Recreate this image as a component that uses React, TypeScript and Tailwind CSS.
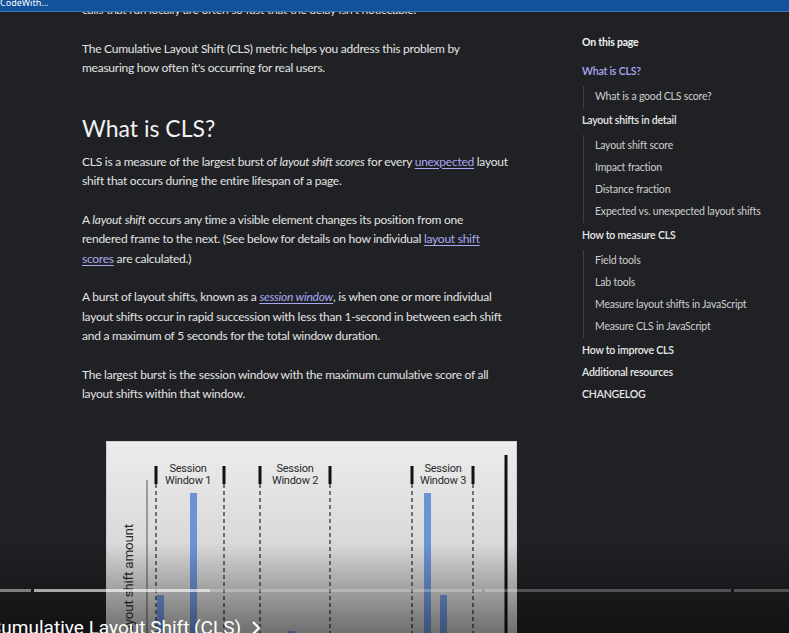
import React from 'react';

const body = { fontFamily: 'Lato, "Noto Sans", sans-serif' };

function Link({ children, italic }: { children: React.ReactNode; italic?: boolean }) {
  return (
    <a className={`text-[#a9a8f2] underline underline-offset-2 decoration-1 ${italic ? 'italic' : ''}`}>
      {children}
    </a>
  );
}

const toc: { label: string; active?: boolean; children?: string[] }[] = [
  { label: 'What is CLS?', active: true, children: ['What is a good CLS score?'] },
  {
    label: 'Layout shifts in detail',
    children: ['Layout shift score', 'Impact fraction', 'Distance fraction', 'Expected vs. unexpected layout shifts'],
  },
  {
    label: 'How to measure CLS',
    children: ['Field tools', 'Lab tools', 'Measure layout shifts in JavaScript', 'Measure CLS in JavaScript'],
  },
  { label: 'How to improve CLS' },
  { label: 'Additional resources' },
  { label: 'CHANGELOG' },
];

function Chart() {
  const dashed = [49, 117, 153, 223, 305, 366];
  const labels = [
    { x: 81, n: 1 },
    { x: 188, n: 2 },
    { x: 336, n: 3 },
  ];
  const bars = [
    { x: 50, top: 153 },
    { x: 83, top: 51 },
    { x: 181, top: 189 },
    { x: 317, top: 51 },
    { x: 333, top: 153 },
  ];
  return (
    <div className="ml-[24px] mt-[37px] h-[220px] w-[411px] border border-[#d0d0d0] bg-gradient-to-b from-[#ececec] to-[#c4c4c4]">
      <svg width="411" height="220" viewBox="0 0 411 220">
        <line x1="40" y1="38" x2="40" y2="220" stroke="#555" strokeWidth="1" />
        {dashed.map((x) => (
          <g key={x}>
            <line x1={x} y1="42" x2={x} y2="220" stroke="#333" strokeWidth="1.3" strokeDasharray="4 3" />
            <line x1={x} y1="24" x2={x} y2="42" stroke="#111" strokeWidth="3" />
          </g>
        ))}
        {labels.map((l) => (
          <text
            key={l.n}
            x={l.x}
            textAnchor="middle"
            fontFamily="Roboto, sans-serif"
            fontSize="11"
            fill="#2a2a2a"
          >
            <tspan x={l.x} y="30">Session</tspan>
            <tspan x={l.x} y="42">Window {l.n}</tspan>
          </text>
        ))}
        {bars.map((b) => (
          <rect key={b.x} x={b.x} y={b.top} width="7" height={220 - b.top} fill="#6b93d6" />
        ))}
        <line x1="399" y1="13" x2="399" y2="220" stroke="#111" strokeWidth="3" />
        <text
          x="26"
          y="82"
          transform="rotate(-90 26 82)"
          textAnchor="end"
          fontFamily="Roboto, sans-serif"
          fontSize="13.5"
          fill="#2a2a2a"
        >
          Layout shift amount
        </text>
      </svg>
    </div>
  );
}

export default function App() {
  return (
    <div className="relative h-[633px] w-[789px] overflow-hidden bg-[#202124] text-[#e3e3e3]" style={body}>
      <div className="flex">
        <main className="ml-[82px] w-[450px] shrink-0 whitespace-nowrap text-[12px] leading-[19.5px] tracking-[-0.25px]">
          <p>calls that run locally are often so fast that the delay isn't noticeable.</p>
          <p className="mt-[19px]">
            The Cumulative Layout Shift (CLS) metric helps you address this problem by
            <br />
            measuring how often it's occurring for real users.
          </p>
          <h2 className="mt-[34px] text-[23px] leading-[32px] tracking-normal text-[#f1f1f1]">What is CLS?</h2>
          <p className="mt-[8px]">
            CLS is a measure of the largest burst of <em>layout shift scores</em> for every <Link>unexpected</Link> layout
            <br />
            shift that occurs during the entire lifespan of a page.
          </p>
          <p className="mt-[19px]">
            A <em>layout shift</em> occurs any time a visible element changes its position from one
            <br />
            rendered frame to the next. (See below for details on how individual <Link>layout shift</Link>
            <br />
            <Link>scores</Link> are calculated.)
          </p>
          <p className="mt-[19px]">
            A burst of layout shifts, known as a <Link italic>session window</Link>, is when one or more individual
            <br />
            layout shifts occur in rapid succession with less than 1-second in between each shift
            <br />
            and a maximum of 5 seconds for the total window duration.
          </p>
          <p className="mt-[19px]">
            The largest burst is the session window with the maximum cumulative score of all
            <br />
            layout shifts within that window.
          </p>
          <Chart />
        </main>

        <aside className="ml-[50px] pt-[32px] whitespace-nowrap text-[10.5px] tracking-[-0.2px]">
          <div className="mb-[7px] flex h-[22px] items-center font-bold text-[#f1f1f1]">On this page</div>
          {toc.map((item) => (
            <div key={item.label}>
              <div
                className={`flex h-[22px] items-center font-semibold ${item.active ? 'text-[#a9a8f2]' : 'text-[#e8e8e8]'}`}
              >
                {item.label}
              </div>
              {item.children && (
                <div className="mb-[2px] ml-[1px] mt-[3px] border-l border-[#3c4043] pl-[11px]">
                  {item.children.map((c) => (
                    <div key={c} className="flex h-[22px] items-center text-[#cfcfcf]">
                      {c}
                    </div>
                  ))}
                </div>
              )}
            </div>
          ))}
        </aside>
      </div>

      {/* browser tab strip over the video */}
      <div className="absolute left-0 right-0 top-0 h-[12px] border-b border-[#3f74b5] bg-[#12519b]">
        <span className="absolute left-0 top-[-4px] text-[9px] text-white" style={{ fontFamily: '"Noto Sans", sans-serif' }}>
          CodeWith...
        </span>
      </div>

      {/* player chrome */}
      <div className="absolute bottom-0 left-0 right-0 h-[90px] bg-gradient-to-b from-transparent to-black/45" />
      <div className="absolute left-0 right-0 top-[589px] flex h-[3px] gap-[3px]">
        <div className="w-[31px] bg-white/45" />
        <div className="relative flex-1 bg-white/25">
          <div className="absolute inset-y-0 left-0 w-[176px] bg-white/50" />
        </div>
        <div className="w-[246px] bg-white/25" />
        <div className="w-[55px] bg-white/25" />
      </div>
      <div
        className="absolute left-[-11px] top-[614px] flex items-center gap-[10px] whitespace-nowrap text-[19px] text-white"
        style={{ fontFamily: 'Roboto, sans-serif' }}
      >
        Cumulative Layout Shift (CLS)
        <svg width="10" height="16" viewBox="0 0 10 16" fill="none">
          <path d="M2 2l6 6-6 6" stroke="white" strokeWidth="2.2" />
        </svg>
      </div>
    </div>
  );
}
